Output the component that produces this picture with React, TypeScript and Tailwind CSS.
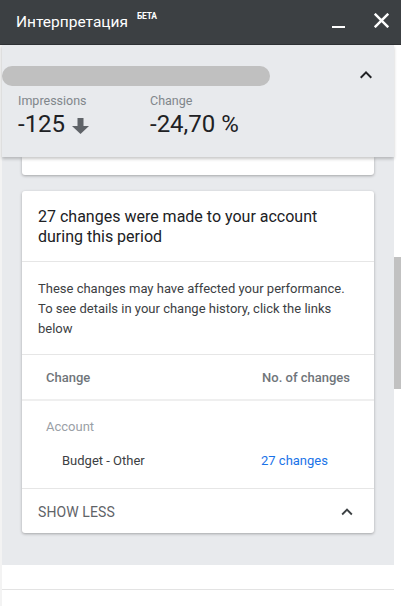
import React from "react";

const ChevronUp = ({ className = "" }: { className?: string }) => (
  <svg viewBox="0 0 24 24" className={className} fill="currentColor">
    <path d="M7.41 15.41 12 10.83l4.59 4.58L18 14l-6-6-6 6z" />
  </svg>
);

export default function App() {
  return (
    <div
      className="w-[401px] h-[606px] bg-white relative overflow-hidden"
      style={{ fontFamily: "Roboto, 'Liberation Sans', sans-serif" }}
    >
      {/* Header */}
      <div className="h-[45px] bg-[#3c4043] flex items-center pl-4 pr-3 border-b border-[#2f3235]">
        <div className="flex items-start text-white">
          <span className="text-[15.5px] leading-5">Интерпретация</span>
          <span className="text-[8.5px] font-bold ml-[9px] mt-[-2px] tracking-tight">БЕТА</span>
        </div>
        <div className="ml-auto flex items-center">
          <div className="w-[13px] h-[2.5px] bg-white mt-[10px] mr-[29px]" />
          <svg viewBox="0 0 14 14" className="w-[15px] h-[15px] mb-[4px]" stroke="white" strokeWidth="2.3" strokeLinecap="square">
            <path d="M1.5 1.5 12.5 12.5M12.5 1.5 1.5 12.5" />
          </svg>
        </div>
      </div>

      <div className="flex">
        {/* left strip */}
        <div className="w-[2px] h-[561px] bg-[#f3f3f3]" />
        {/* panel */}
        <div className="w-[392px] flex flex-col">
          <div className="h-[520px] bg-[#e8eaed] flex flex-col">
            {/* Summary */}
            <div className="relative z-10 h-[112px] bg-[#e8eaed] shadow-[0_2px_3px_rgba(0,0,0,0.22)] px-4 pt-[21px]">
              <div className="absolute left-0 top-[21px] w-[268px] h-[20px] rounded-full bg-[#c0c0c0]" />
              <div className="h-[20px]" />
              <ChevronUp className="absolute right-[16px] top-[18px] w-[24px] h-[24px] text-[#202124]" />
              <div className="flex mt-[7px]">
                <div className="w-[132px]">
                  <div className="text-[12.5px] leading-4 text-[#80868b]">Impressions</div>
                  <div className="flex items-center mt-[1px]">
                    <span className="text-[24px] leading-7 text-[#202124]">-125</span>
                    <svg viewBox="0 0 17 16" className="w-[17px] h-[16px] ml-[7px] mt-[3px]" fill="#5f6368">
                      <path d="M5.5 0h6v8h5.5L8.5 16 0 8h5.5z" />
                    </svg>
                  </div>
                </div>
                <div>
                  <div className="text-[12.5px] leading-4 text-[#80868b]">Change</div>
                  <div className="text-[24px] leading-7 text-[#202124] mt-[1px]">-24,70 %</div>
                </div>
              </div>
            </div>

            <div className="px-5 flex flex-col">
              {/* partial card */}
              <div className="h-[18px] bg-white rounded-b-[3px] shadow-[0_1px_3px_rgba(0,0,0,0.3)]" />

              {/* main card */}
              <div className="mt-[16px] bg-white rounded-[3px] shadow-[0_1px_3px_rgba(0,0,0,0.3)] flex flex-col">
                <div className="px-4 pt-[16px] pb-[14px] text-[16px] leading-5 text-[#202124] border-b border-[#e6e6e6]">
                  27 changes were made to your account during this period
                </div>
                <div className="px-4 pt-[17px] pb-[15px] text-[13px] leading-5 text-[#3c4043] border-b border-[#e6e6e6]">
                  These changes may have affected your performance. To see details in your change history, click the links below
                </div>
                <div className="h-[46px] flex items-center justify-between pl-6 pr-6 pt-[1px] text-[13px] font-medium text-[#70757a] border-b-2 border-[#efefef]">
                  <span>Change</span>
                  <span>No. of changes</span>
                </div>
                <div className="h-[16px]" />
                <div className="pl-6 text-[13px] leading-5 text-[#9aa0a6]">Account</div>
                <div className="flex items-center pl-10 pr-6 mt-[14px] text-[13px] leading-5">
                  <span className="text-[#3c4043]">Budget - Other</span>
                  <span className="ml-auto w-[89px] text-[#1a73e8]">27 changes</span>
                </div>
                <div className="h-[18px] border-b border-[#e6e6e6]" />
                <div className="h-[44px] flex items-center pl-4 pr-4 pt-[2px]">
                  <span className="text-[14px] text-[#5f6368] tracking-[0.1px]">SHOW LESS</span>
                  <ChevronUp className="ml-auto w-[22px] h-[22px] text-[#3c4043]" />
                </div>
              </div>
            </div>
          </div>
          <div className="h-[25px] border-b border-[#e3e3e3]" />
        </div>
        {/* scrollbar column */}
        <div className="w-[7px] flex flex-col">
          <div className="h-[212px]" />
          <div className="h-[132px] bg-[#c1c1c1]" />
        </div>
      </div>
    </div>
  );
}
